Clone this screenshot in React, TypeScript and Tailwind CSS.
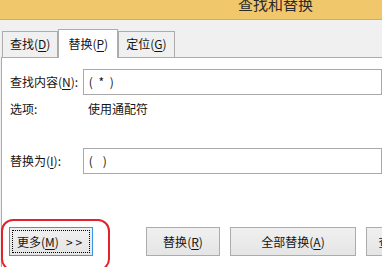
const font = { fontFamily: '"Noto Sans CJK SC", "Noto Sans", sans-serif' };

function Tab({ label, k, active }: { label: string; k: string; active?: boolean }) {
  return (
    <div
      className={
        active
          ? 'relative z-10 -mb-px h-[29px] border border-b-0 border-[#acacac] bg-white px-[9px] pt-[5px] text-[12px]'
          : 'mt-[2px] h-[26px] border border-b-0 border-[#acacac] bg-[#f0f0f0] px-[7px] pt-[3px] text-[12px]'
      }
    >
      {label}(<u className="underline-offset-2">{k}</u>)
    </div>
  );
}

function Btn({ label, k, w, focus }: { label: string; k: string; w: string; focus?: boolean }) {
  return (
    <div
      className={
        'flex h-[29px] shrink-0 items-center justify-center border bg-gradient-to-b from-[#f0f0f0] to-[#e5e5e5] text-[12px] ' +
        w +
        (focus ? ' border-[#3c96e8] p-[2px]' : ' border-[#acacac]')
      }
    >
      {focus ? (
        <div className="flex h-full w-full items-center border border-dotted border-black pl-[4px]">
          {label}(<u className="underline-offset-2">{k}</u>)<span className="ml-[7px] tracking-[3px]">&gt;&gt;</span>
        </div>
      ) : (
        <span>
          {label}(<u className="underline-offset-2">{k}</u>)
        </span>
      )}
    </div>
  );
}

export default function App() {
  return (
    <div className="h-[267px] w-[382px] overflow-hidden bg-[#f0f0f0] text-[#141414]" style={font}>
      {/* title bar */}
      <div className="h-[20px] overflow-hidden border-b border-[#d9aa55] bg-[#f0c76b]">
        <div className="-mt-[7px] pl-[238px] text-[15px] leading-[22px] text-[#2a2a2a]">查找和替换</div>
      </div>

      {/* tabs */}
      <div className="flex items-start pl-[2px] pt-[9px]">
        <Tab label="查找" k="D" />
        <Tab label="替换" k="P" active />
        <Tab label="定位" k="G" />
      </div>

      {/* panel */}
      <div className="ml-[1px] h-[210px] border-l border-t border-[#acacac] bg-white pl-[8px] text-[12px] leading-[16px]">
        <div className="flex items-center pt-[11px]">
          <div className="w-[78px]">
            查找内容(<u className="underline-offset-2">N</u>):
          </div>
          <div className="flex h-[26px] w-[320px] items-center border border-[#a9a9a9] pl-[5px] tracking-[1.5px]">(&nbsp;*&nbsp;)</div>
        </div>
        <div className="mt-[6px] flex items-center">
          <div className="w-[78px]">选项:</div>
          <div>使用通配符</div>
        </div>
        <div className="mt-[31px] flex items-center">
          <div className="w-[78px]">
            替换为(<u className="underline-offset-2">I</u>):
          </div>
          <div className="flex h-[26px] w-[320px] items-center border border-[#a9a9a9] pl-[5px] tracking-[1.5px]">(&nbsp;&nbsp;)</div>
        </div>

        <div className="mt-[53px] flex items-center">
          <div className="relative -ml-[8px] w-[108px] shrink-0 pl-[7px]">
            <Btn label="更多" k="M" w="w-[84px]" focus />
            <div className="absolute -left-[1px] -top-[8px] h-[52px] w-[109px] rounded-[12px] border-2 border-[#e3232b]" />
          </div>
          <div className="ml-[36px] flex gap-[10px]">
            <Btn label="替换" k="R" w="w-[74px]" />
            <Btn label="全部替换" k="A" w="w-[126px]" />
            <Btn label="查找下一处" k="F" w="w-[100px]" />
          </div>
        </div>
      </div>
    </div>
  );
}
